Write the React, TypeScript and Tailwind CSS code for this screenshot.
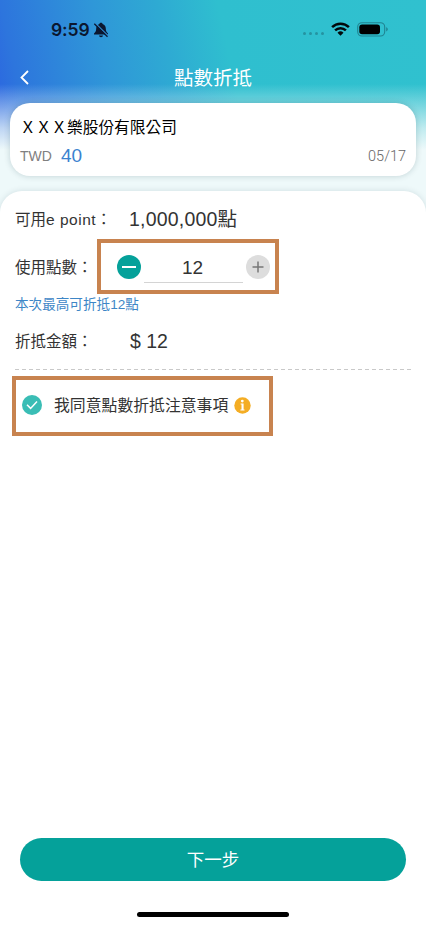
import { useState } from "react";

const MAX_POINTS = 12;

const StatusBar = () => {
  return (
    <div className="flex h-[58px] items-start justify-between pl-[51px] pr-[37px] pt-[20px]">
      <div className="flex items-center">
        <span className="w-[41px] whitespace-nowrap font-['Inter','Liberation_Sans',sans-serif] text-[17.5px] font-semibold leading-[19px] tracking-[-0.1px] text-[#0b1730]">
          9:59
        </span>
        <svg className="ml-[1px]" width="16" height="16" viewBox="0 0 16 16">
          <path
            d="M8 .8c-.9 0-1.500.5-1.600 1.300C4.300 2.800 3.200 4.500 3.200 6.600c0 2.800-.8 3.800-2.200 4.800v1h14v-1c-1.400-1-2.200-2-2.200-4.800 0-2.100-1.100-3.800-3.200-4.500C9.500 1.300 8.900.8 8 .8z"
            fill="#0b1730"
          />
          <path d="M6 13.500h4c-.2 1-1 1.700-2 1.700s-1.800-.7-2-1.700z" fill="#0b1730" />
          <path d="M2.300 1.100l13 12.900" stroke="#318fd8" strokeWidth="1.200" />
          <path d="M1.300 1.700l13.200 13.100" stroke="#0b1730" strokeWidth="1.200" />
        </svg>
      </div>

      <div className="flex h-[18px] items-center">
        <div className="mt-[9px] flex gap-[2.500px]">
          <span className="size-[3.500px] rounded-full bg-[#2593a1]" />
          <span className="size-[3.500px] rounded-full bg-[#2593a1]" />
          <span className="size-[3.500px] rounded-full bg-[#2593a1]" />
          <span className="size-[3.500px] rounded-full bg-[#2593a1]" />
        </div>
        <svg className="ml-[7px]" width="19" height="14" viewBox="0 0 19 14">
          <g fill="none" stroke="#020a0c" strokeWidth="2.500">
            <path d="M1.100 5.200a12 12 0 0 1 16.800 0" />
            <path d="M4.100 8.400a7.700 7.700 0 0 1 10.800 0" />
          </g>
          <path d="M9.500 13.700L6.500 10.700a4.300 4.300 0 0 1 6 0z" fill="#020a0c" />
        </svg>
        <svg className="ml-[7px]" width="32" height="15" viewBox="0 0 32 15">
          <rect x="0.700" y="0.700" width="27" height="13.300" rx="4.200" fill="none" stroke="#208391" strokeWidth="1.100" />
          <rect x="2.300" y="2.400" width="20.700" height="9.900" rx="2.800" fill="#000000" />
          <path d="M29.200 5.200v4.300c.9-.3 1.600-1.200 1.600-2.150s-.7-1.850-1.600-2.150z" fill="#208391" />
        </svg>
      </div>
    </div>
  );
};

const NavBar = () => {
  return (
    <div className="grid h-[45px] grid-cols-[1fr_auto_1fr] items-start">
      <button className="ml-[20px] mt-[12px] w-[10px]" type="button" aria-label="back">
        <svg width="10" height="15" viewBox="0 0 10 15">
          <path d="M8 1L1.500 7.500L8 14" fill="none" stroke="#ffffff" strokeWidth="1.800" />
        </svg>
      </button>
      <h1 className="mt-[6px] text-[19.500px] font-normal leading-[28px] text-white">
        點數折抵
      </h1>
    </div>
  );
};

const BillCard = () => {
  return (
    <div className="mx-[10px] h-[73px] rounded-[20px] bg-white pl-[10px] pr-[10px] pt-[14px] shadow-[0_0_6px_rgba(0,50,60,0.2)]">
      <div className="text-[15.700px] leading-[22px] text-black">
        ＸＸＸ樂股份有限公司
      </div>
      <div className="mt-[4px] flex h-[26px] items-center">
        <span className="w-[41px] text-[14px] text-[#808080]">TWD</span>
        <span className="text-[19px] text-[#3b82cf]">40</span>
        <span className="ml-auto mt-[2px] font-['Roboto',sans-serif] text-[14.500px] font-light text-[#666666]">
          05/17
        </span>
      </div>
    </div>
  );
};

const App = () => {
  const [points, setPoints] = useState<number>(12);
  const [agreed, setAgreed] = useState<boolean>(true);

  return (
    <div className="flex h-[925px] w-[426px] flex-col overflow-hidden bg-[linear-gradient(180deg,transparent_84px,rgba(238,249,250,0.25)_98px,rgba(238,249,250,0.75)_128px,#eef9fa_150px),linear-gradient(78deg,#2c68e0_170px,#2d75dd_192px,#2f97d8_282px,#2eaad3_345px,#2fbfcf_405px,#30c1cf_100%)] font-['Liberation_Sans','Noto_Sans_CJK_TC',sans-serif] text-[#333333]">
      <StatusBar />
      <NavBar />
      <BillCard />

      <div className="mt-[15px] flex flex-1 flex-col rounded-t-[22px] bg-white shadow-[0_0_6px_rgba(0,50,60,0.13)]">
        <div className="flex h-[48px] items-center pl-[15px] pt-[10px]">
          <span className="w-[114px] whitespace-nowrap text-[15.500px]">
            可用<span className="tracking-[0.500px]">e point</span>：
          </span>
          <span className="whitespace-nowrap text-[19.500px]">
            <span className="tracking-[0.200px]">1,000,000</span>點
          </span>
        </div>

        <div className="flex h-[55px] items-center pl-[15px]">
          <span className="w-[82px] whitespace-nowrap pt-[2px] text-[15.500px]">使用點數：</span>
          <div className="flex h-[55px] w-[182px] items-center border-4 border-[#c8834f] pl-[16px]">
            <button
              className="flex size-[24px] items-center justify-center rounded-full bg-[#05a19a]"
              onClick={() => setPoints((previous) => Math.max(0, previous - 1))}
              type="button"
              aria-label="minus"
            >
              <span className="h-[2px] w-[14px] bg-white" />
            </button>
            <span className="ml-[3px] mt-[1px] h-[32px] w-[99px] border-b border-[#d4d4d4] pr-[2px] text-center text-[19px] leading-[33px]">
              {points}
            </span>
            <button
              className="ml-[3px] flex size-[24px] items-center justify-center rounded-full bg-[#dddddd]"
              onClick={() => setPoints((previous) => Math.min(MAX_POINTS, previous + 1))}
              type="button"
              aria-label="plus"
            >
              <svg width="12" height="12" viewBox="0 0 12 12">
                <path d="M6 0.500v11M0.500 6h11" stroke="#777777" strokeWidth="1.500" />
              </svg>
            </button>
          </div>
        </div>

        <div className="h-[24px] pl-[15px] text-[13.600px] leading-[22px] text-[#3d86c6]">
          本次最高可折抵12點
        </div>

        <div className="flex h-[46px] items-center pl-[15px] pt-[2px]">
          <span className="w-[115px] whitespace-nowrap text-[15.500px]">折抵金額：</span>
          <span className="text-[19.500px]">$ {points}</span>
        </div>

        <div className="ml-[15px] mr-[15px] mt-[5px] h-px bg-[repeating-linear-gradient(90deg,#c9c9c9_0px,#c9c9c9_4px,transparent_4px,transparent_7px)]" />

        <div className="ml-[12px] mt-[6px] flex h-[60px] w-[261px] items-center border-4 border-[#c8834f] pb-[2px] pl-[6px]">
          <button
            className="flex size-[20px] items-center justify-center rounded-full bg-[#3abdb5]"
            onClick={() => setAgreed((previous) => !previous)}
            type="button"
            aria-label="agree"
          >
            {agreed && (
              <svg width="12" height="10" viewBox="0 0 12 10">
                <path d="M1 4.800L4.600 8.400L11 1.500" fill="none" stroke="#ffffff" strokeWidth="1.500" />
              </svg>
            )}
          </button>
          <span className="ml-[12px] whitespace-nowrap pt-[2px] text-[15.850px]">我同意點數折抵注意事項</span>
          <svg className="ml-[6px]" width="17" height="17" viewBox="0 0 17 17">
            <circle cx="8.500" cy="8.500" r="8.200" fill="#f4ad24" />
            <circle cx="8.300" cy="4.100" r="1.400" fill="#ffffff" />
            <path d="M6.600 6.600h3v6h.9v1H6.400v-1h1.100v-5h-.9z" fill="#ffffff" />
          </svg>
        </div>

        <div className="mt-auto flex flex-col items-center pb-[8px]">
          <button
            className="h-[43px] w-[386px] rounded-full bg-[#05a19a] pt-[2px] text-[17.500px] text-white"
            type="button"
          >
            下一步
          </button>
          <div className="mt-[31px] h-[5px] w-[152px] rounded-full bg-black" />
        </div>
      </div>
    </div>
  );
};

export default App;
